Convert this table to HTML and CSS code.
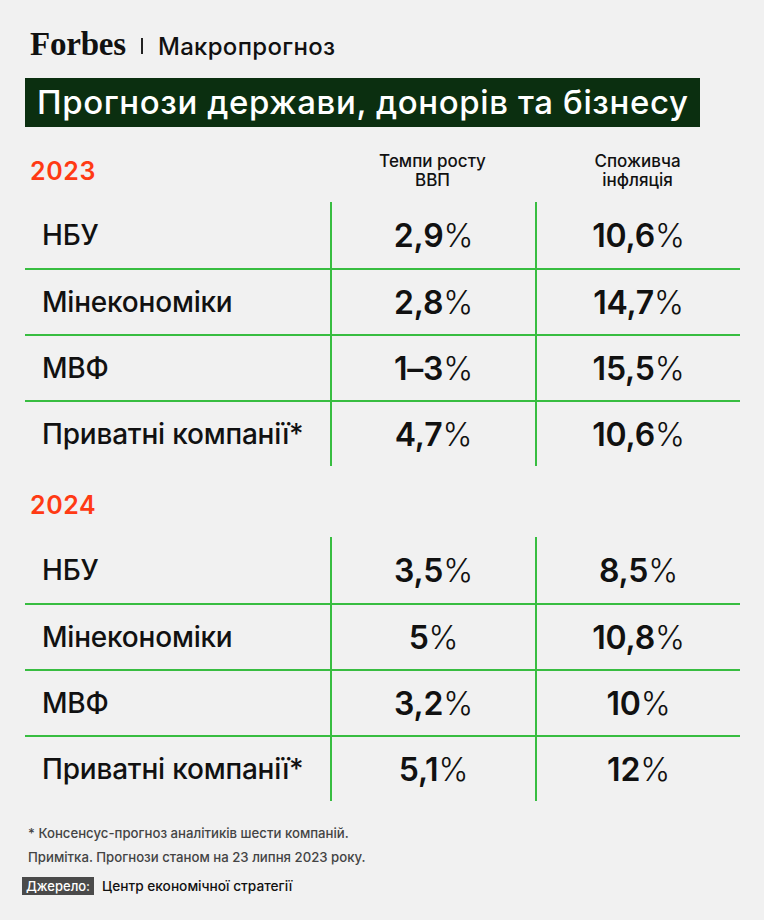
FILE: index.html
```html
<!DOCTYPE html>
<html lang="uk">
<head>
<meta charset="utf-8">
<title>Прогнози держави, донорів та бізнесу</title>
<link rel="stylesheet" href="styles.css">
</head>
<body>
<div class="page">
  <header class="brand">
    <span class="logo">Forbes</span>
    <span class="sep"></span>
    <span class="rubric">Макропрогноз</span>
  </header>
  <h1 class="title">Прогнози держави, донорів та бізнесу</h1>

  <div class="section-head first">
    <div class="year">2023</div>
    <div class="colhead">Темпи росту<br>ВВП</div>
    <div class="colhead">Споживча<br>інфляція</div>
  </div>
  <div class="table">
    <div class="row"><div class="label">НБУ</div><div class="val">2,9<span class="pct">%</span></div><div class="val">10,6<span class="pct">%</span></div></div>
    <div class="row"><div class="label">Мінекономіки</div><div class="val">2,8<span class="pct">%</span></div><div class="val">14,7<span class="pct">%</span></div></div>
    <div class="row"><div class="label">МВФ</div><div class="val">1–3<span class="pct">%</span></div><div class="val">15,5<span class="pct">%</span></div></div>
    <div class="row"><div class="label">Приватні компанії*</div><div class="val">4,7<span class="pct">%</span></div><div class="val">10,6<span class="pct">%</span></div></div>
  </div>

  <div class="section-head second">
    <div class="year">2024</div>
  </div>
  <div class="table">
    <div class="row"><div class="label">НБУ</div><div class="val">3,5<span class="pct">%</span></div><div class="val">8,5<span class="pct">%</span></div></div>
    <div class="row"><div class="label">Мінекономіки</div><div class="val">5<span class="pct">%</span></div><div class="val">10,8<span class="pct">%</span></div></div>
    <div class="row"><div class="label">МВФ</div><div class="val">3,2<span class="pct">%</span></div><div class="val">10<span class="pct">%</span></div></div>
    <div class="row"><div class="label">Приватні компанії*</div><div class="val">5,1<span class="pct">%</span></div><div class="val">12<span class="pct">%</span></div></div>
  </div>

  <footer class="notes">
    <p class="note">* Консенсус-прогноз аналітиків шести компаній.</p>
    <p class="note">Примітка. Прогнози станом на 23 липня 2023 року.</p>
    <p class="source"><span class="source-tag">Джерело:</span><span class="source-name">Центр економічної стратегії</span></p>
  </footer>
</div>
</body>
</html>
```
FILE: styles.css
```css
html, body {
  margin: 0;
  padding: 0;
  background: #f1f1f1;
}
body {
  font-family: Inter, "Noto Sans", "DejaVu Sans", sans-serif;
  color: #111;
  width: 764px;
  height: 920px;
  overflow: hidden;
}
.page {
  padding: 0 24px 0 25px;
}
.brand {
  display: flex;
  align-items: center;
  height: 36px;
  margin-top: 26px;
  padding-left: 5px;
}
.logo {
  font-family: "Liberation Serif", "Times New Roman", serif;
  font-weight: 700;
  font-size: 33px;
  letter-spacing: -0.2px;
  color: #111;
  line-height: 1;
}
.sep {
  display: block;
  width: 2px;
  height: 16px;
  background: #222;
  margin: 4px 15px 0 15px;
}
.rubric {
  font-size: 24px;
  font-weight: 500;
  letter-spacing: 0.3px;
  color: #111;
  margin-top: 4px;
}
.title {
  margin: 16px 0 0 0;
  width: 675px;
  height: 49px;
  box-sizing: border-box;
  background: #0b2f10;
  color: #fff;
  font-size: 33px;
  font-weight: 500;
  line-height: 49px;
  padding-left: 12px;
  white-space: nowrap;
  overflow: hidden;
  letter-spacing: 0.6px;
}
.section-head {
  display: grid;
  grid-template-columns: 305px 205px 205px;
  align-items: center;
}
.section-head.first {
  height: 63px;
  padding-top: 12px;
}
.section-head.second {
  height: 64px;
  padding-top: 7px;
}
.year {
  color: #ff3a14;
  font-size: 25px;
  font-weight: 600;
  letter-spacing: 0.6px;
  padding-left: 5px;
}
.colhead {
  text-align: center;
  font-size: 17px;
  font-weight: 500;
  line-height: 19px;
  color: #111;
}
.table {
  width: 715px;
}
.row {
  display: grid;
  grid-template-columns: 305px 205px 205px;
  height: 66px;
  box-sizing: border-box;
}
.row + .row {
  border-top: 2px solid #38bd41;
}
.label {
  display: flex;
  align-items: center;
  padding-left: 17px;
  font-size: 28px;
  font-weight: 500;
  letter-spacing: -0.2px;
}
.val {
  display: flex;
  align-items: center;
  justify-content: center;
  border-left: 2px solid #38bd41;
  font-size: 32px;
  font-weight: 600;
  letter-spacing: -0.2px;
}
.pct {
  font-weight: 300;
}
.notes {
  margin-top: 20px;
}
.note {
  margin: 0;
  padding-left: 3px;
  font-size: 13.2px;
  font-weight: 500;
  line-height: 24px;
  color: #444;
}
.source {
  margin: 7px 0 0 -3px;
  display: flex;
  align-items: center;
  gap: 8px;
  height: 20px;
}
.source-tag {
  background: #4a4a4a;
  color: #fff;
  font-size: 13px;
  font-weight: 500;
  padding: 0 4px;
  line-height: 18px;
}
.source-name {
  font-size: 13.7px;
  font-weight: 500;
  color: #111;
}
```
